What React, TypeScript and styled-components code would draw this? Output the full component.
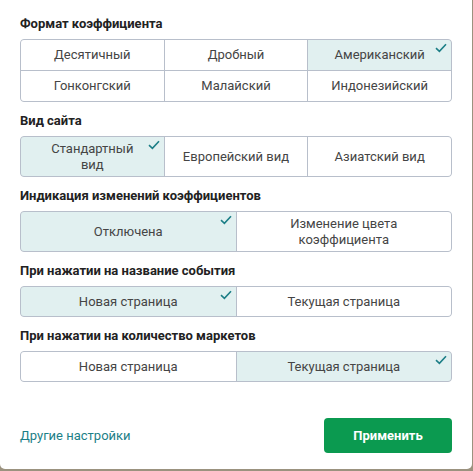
import React, { useState } from 'react';
import styled, { createGlobalStyle } from 'styled-components';

const teal = '#1d7f87';
const borderGray = '#b8bfcb';
const activeBg = '#e1f0f0';
const textGray = '#454545';

const GlobalStyle = createGlobalStyle`
  html, body {
    margin: 0;
    padding: 0;
    background: #9b927f;
  }
  body {
    font-family: Roboto, "Liberation Sans", Arial, sans-serif;
  }
`;

const Panel = styled.div`
  width: 472px;
  height: 469px;
  box-sizing: border-box;
  padding: 16px 20px 16px 20px;
  background: #fff;
  border-radius: 0 0 5px 5px;
  display: flex;
  flex-direction: column;
`;

const Section = styled.div`
  & + & {
    margin-top: 11px;
  }
`;

const Title = styled.div`
  font-size: 13px;
  line-height: 16px;
  font-weight: 700;
  color: #222;
  margin-bottom: 7px;
`;

const Grid = styled.div<{ $cols: number }>`
  display: grid;
  grid-template-columns: repeat(${p => p.$cols}, 1fr);
  gap: 1px;
  background: ${borderGray};
  border: 1px solid ${borderGray};
  border-radius: 4px;
  overflow: hidden;
`;

const Cell = styled.div<{ $active: boolean; $height: number }>`
  position: relative;
  height: ${p => p.$height}px;
  box-sizing: border-box;
  padding: 0 16px;
  display: flex;
  align-items: center;
  justify-content: center;
  text-align: center;
  white-space: pre-line;
  font-size: 13px;
  line-height: 16px;
  color: ${textGray};
  background: ${p => (p.$active ? activeBg : '#fff')};
  cursor: pointer;
`;

const Check = styled.svg`
  position: absolute;
  top: 3px;
  right: 4px;
  width: 12px;
  height: 10px;
`;

const Footer = styled.div`
  margin-top: auto;
  display: flex;
  align-items: center;
  justify-content: space-between;
`;

const Link = styled.a`
  font-size: 13px;
  color: ${teal};
  text-decoration: none;
  cursor: pointer;
`;

const ApplyButton = styled.button`
  width: 128px;
  height: 35px;
  border: none;
  border-radius: 4px;
  background: #0b9a50;
  color: #fff;
  font-family: inherit;
  font-size: 13px;
  font-weight: 700;
  cursor: pointer;
`;

interface Group {
  title: string;
  cols: number;
  height: number;
  options: string[];
  selected: number;
}

const groups: Group[] = [
  {
    title: 'Формат коэффициента',
    cols: 3,
    height: 30,
    options: ['Десятичный', 'Дробный', 'Американский', 'Гонконгский', 'Малайский', 'Индонезийский'],
    selected: 2
  },
  {
    title: 'Вид сайта',
    cols: 3,
    height: 39,
    options: ['Стандартный\nвид', 'Европейский вид', 'Азиатский вид'],
    selected: 0
  },
  {
    title: 'Индикация изменений коэффициентов',
    cols: 2,
    height: 39,
    options: ['Отключена', 'Изменение цвета\nкоэффициента'],
    selected: 0
  },
  {
    title: 'При нажатии на название события',
    cols: 2,
    height: 29,
    options: ['Новая страница', 'Текущая страница'],
    selected: 0
  },
  {
    title: 'При нажатии на количество маркетов',
    cols: 2,
    height: 29,
    options: ['Новая страница', 'Текущая страница'],
    selected: 1
  }
];

const CheckMark = () => (
  <Check viewBox="0 0 12 10">
    <polyline
      points="1,5.2 4.4,8.4 11,1.2"
      fill="none"
      stroke={teal}
      strokeWidth="1.6"
    />
  </Check>
);

const OptionGroup = ({ group }: { group: Group }) => {
  const [selected, setSelected] = useState(group.selected);
  return (
    <Section>
      <Title>{group.title}</Title>
      <Grid $cols={group.cols}>
        {group.options.map((label, i) => (
          <Cell
            key={i}
            $active={i === selected}
            $height={group.height}
            onClick={() => setSelected(i)}
          >
            {label}
            {i === selected && <CheckMark />}
          </Cell>
        ))}
      </Grid>
    </Section>
  );
};

const App = () => (
  <>
    <GlobalStyle />
    <Panel>
      {groups.map(g => (
        <OptionGroup key={g.title} group={g} />
      ))}
      <Footer>
        <Link>Другие настройки</Link>
        <ApplyButton>Применить</ApplyButton>
      </Footer>
    </Panel>
  </>
);

export default App;
